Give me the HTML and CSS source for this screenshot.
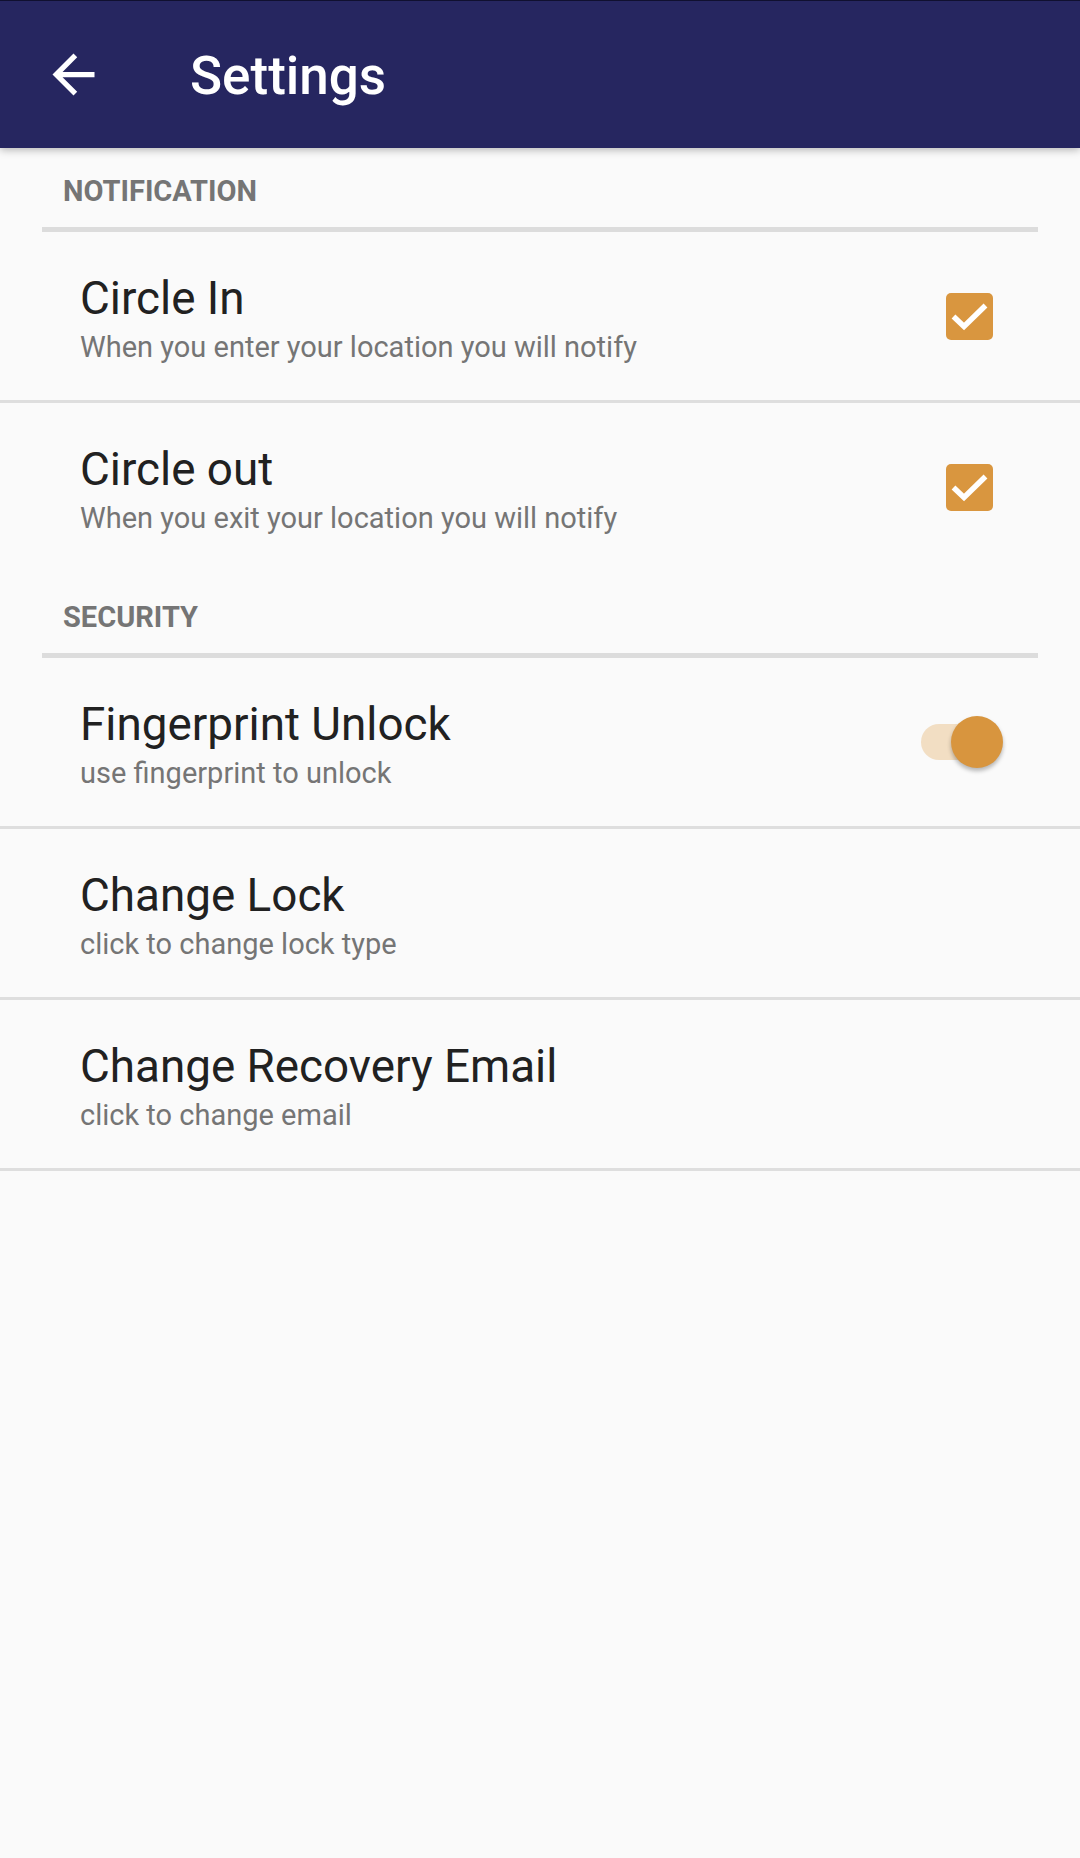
FILE: index.html
```html
<!DOCTYPE html>
<html lang="en">
<head>
<meta charset="utf-8">
<title>Settings</title>
<link rel="stylesheet" href="styles.css">
</head>
<body>
<header class="toolbar">
  <svg class="back" viewBox="0 0 24 24" width="63" height="63" aria-hidden="true">
    <path d="M20 11H7.83l5.59-5.59L12 4l-8 8 8 8 1.41-1.41L7.83 13H20v-2z" fill="#ffffff"/>
  </svg>
  <h1 class="toolbar-title">Settings</h1>
</header>

<main class="prefs">
  <section class="category">
    <div class="cat-head"><span class="cat-title">NOTIFICATION</span></div>
    <div class="row">
      <div class="texts">
        <div class="title">Circle In</div>
        <div class="summary">When you enter your location you will notify</div>
      </div>
      <div class="checkbox">
        <svg viewBox="0 0 47 47" width="47" height="47" aria-hidden="true">
          <polyline points="7.5,23.5 18,33.5 39.5,12.5" fill="none" stroke="#ffffff" stroke-width="5.5"/>
        </svg>
      </div>
    </div>
    <div class="row last">
      <div class="texts">
        <div class="title">Circle out</div>
        <div class="summary">When you exit your location you will notify</div>
      </div>
      <div class="checkbox">
        <svg viewBox="0 0 47 47" width="47" height="47" aria-hidden="true">
          <polyline points="7.5,23.5 18,33.5 39.5,12.5" fill="none" stroke="#ffffff" stroke-width="5.5"/>
        </svg>
      </div>
    </div>
  </section>

  <section class="category">
    <div class="cat-head"><span class="cat-title">SECURITY</span></div>
    <div class="row">
      <div class="texts">
        <div class="title">Fingerprint Unlock</div>
        <div class="summary">use fingerprint to unlock</div>
      </div>
      <div class="switch">
        <span class="track"></span>
        <span class="thumb"></span>
      </div>
    </div>
    <div class="row">
      <div class="texts">
        <div class="title">Change Lock</div>
        <div class="summary">click to change lock type</div>
      </div>
    </div>
    <div class="row">
      <div class="texts">
        <div class="title">Change Recovery Email</div>
        <div class="summary">click to change email</div>
      </div>
    </div>
  </section>
</main>
</body>
</html>
```

FILE: styles.css
```css
* { box-sizing: border-box; }

html, body {
  margin: 0;
  padding: 0;
  background: #fafafa;
  font-family: Roboto, "Noto Sans", "Liberation Sans", sans-serif;
}

body {
  width: 1080px;
  min-height: 1858px;
}

.toolbar {
  height: 148px;
  background: #262660;
  border-top: 1px solid #101030;
  display: flex;
  align-items: center;
  padding-left: 42px;
  box-shadow: 0 2px 8px rgba(0, 0, 0, 0.28);
  position: relative;
  z-index: 1;
}

.back {
  display: block;
  flex: none;
}

.toolbar-title {
  margin: 2px 0 0 85px;
  color: #ffffff;
  font-size: 53px;
  font-weight: 500;
  line-height: 62px;
}

.cat-head {
  margin: 0 42px;
  padding: 26px 0 19px 21px;
  border-bottom: 5px solid #dcdcdc;
}

.cat-title {
  display: block;
  font-size: 29px;
  font-weight: 700;
  line-height: 34px;
  color: #757575;
}

.row {
  display: flex;
  align-items: center;
  height: 171px;
  border-bottom: 3px solid #dedede;
  padding-left: 80px;
}

.row.last {
  border-bottom-color: transparent;
}

.texts {
  flex: 1;
  padding-top: 40px;
  padding-bottom: 32px;
  align-self: stretch;
}

.title {
  font-size: 45.8px;
  line-height: 54px;
  color: #212121;
}

.summary {
  margin-top: 1px;
  font-size: 29px;
  line-height: 40px;
  color: #757575;
}

.checkbox {
  width: 47px;
  height: 47px;
  border-radius: 5px;
  background: #d9963f;
  margin-right: 87px;
  flex: none;
}

.checkbox svg {
  display: block;
}

.switch {
  position: relative;
  width: 82px;
  height: 52px;
  margin-right: 77px;
  flex: none;
}

.track {
  position: absolute;
  left: 0;
  top: 8px;
  width: 78px;
  height: 36px;
  border-radius: 18px;
  background: #f2dec3;
}

.thumb {
  position: absolute;
  right: 0;
  top: 0;
  width: 52px;
  height: 52px;
  border-radius: 50%;
  background: #d8953e;
  box-shadow: 0 3px 4px rgba(0, 0, 0, 0.28);
}
```
